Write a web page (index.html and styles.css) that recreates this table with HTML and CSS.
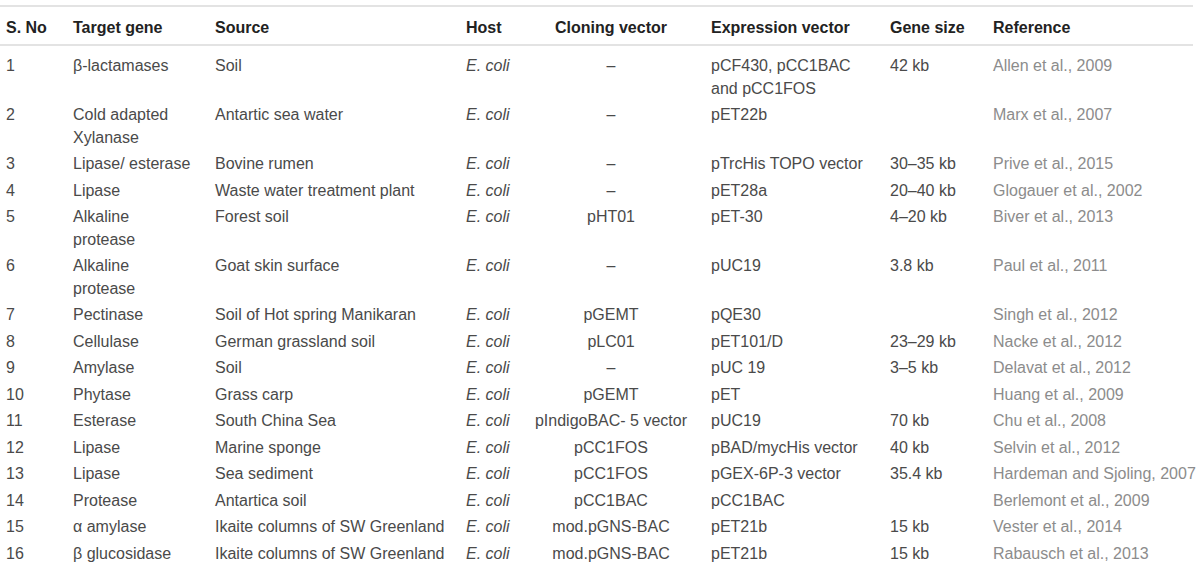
FILE: index.html
```html
<!DOCTYPE html>
<html lang="en">
<head>
<meta charset="utf-8">
<title>Metagenomic enzymes</title>
<link rel="stylesheet" href="styles.css">
</head>
<body>
<table class="data">
  <colgroup>
    <col class="w-no"><col class="w-gene"><col class="w-src"><col class="w-host">
    <col class="w-clone"><col class="w-expr"><col class="w-size"><col class="w-ref">
  </colgroup>
  <thead>
    <tr>
      <th>S. No</th><th>Target gene</th><th>Source</th><th>Host</th>
      <th class="center">Cloning vector</th><th class="expr">Expression vector</th><th>Gene size</th><th>Reference</th>
    </tr>
  </thead>
  <tbody>
    <tr><td>1</td><td>β-lactamases</td><td>Soil</td><td class="host">E. coli</td><td class="center">–</td><td class="expr">pCF430, pCC1BAC<br>and pCC1FOS</td><td>42 kb</td><td class="ref">Allen et al., 2009</td></tr>
    <tr><td>2</td><td>Cold adapted<br>Xylanase</td><td>Antartic sea water</td><td class="host">E. coli</td><td class="center">–</td><td class="expr">pET22b</td><td></td><td class="ref">Marx et al., 2007</td></tr>
    <tr><td>3</td><td>Lipase/ esterase</td><td>Bovine rumen</td><td class="host">E. coli</td><td class="center">–</td><td class="expr">pTrcHis TOPO vector</td><td>30–35 kb</td><td class="ref">Prive et al., 2015</td></tr>
    <tr><td>4</td><td>Lipase</td><td>Waste water treatment plant</td><td class="host">E. coli</td><td class="center">–</td><td class="expr">pET28a</td><td>20–40 kb</td><td class="ref">Glogauer et al., 2002</td></tr>
    <tr><td>5</td><td>Alkaline<br>protease</td><td>Forest soil</td><td class="host">E. coli</td><td class="center">pHT01</td><td class="expr">pET-30</td><td>4–20 kb</td><td class="ref">Biver et al., 2013</td></tr>
    <tr><td>6</td><td>Alkaline<br>protease</td><td>Goat skin surface</td><td class="host">E. coli</td><td class="center">–</td><td class="expr">pUC19</td><td>3.8 kb</td><td class="ref">Paul et al., 2011</td></tr>
    <tr><td>7</td><td>Pectinase</td><td>Soil of Hot spring Manikaran</td><td class="host">E. coli</td><td class="center">pGEMT</td><td class="expr">pQE30</td><td></td><td class="ref">Singh et al., 2012</td></tr>
    <tr><td>8</td><td>Cellulase</td><td>German grassland soil</td><td class="host">E. coli</td><td class="center">pLC01</td><td class="expr">pET101/D</td><td>23–29 kb</td><td class="ref">Nacke et al., 2012</td></tr>
    <tr><td>9</td><td>Amylase</td><td>Soil</td><td class="host">E. coli</td><td class="center">–</td><td class="expr">pUC 19</td><td>3–5 kb</td><td class="ref">Delavat et al., 2012</td></tr>
    <tr><td>10</td><td>Phytase</td><td>Grass carp</td><td class="host">E. coli</td><td class="center">pGEMT</td><td class="expr">pET</td><td></td><td class="ref">Huang et al., 2009</td></tr>
    <tr><td>11</td><td>Esterase</td><td>South China Sea</td><td class="host">E. coli</td><td class="center">pIndigoBAC- 5 vector</td><td class="expr">pUC19</td><td>70 kb</td><td class="ref">Chu et al., 2008</td></tr>
    <tr><td>12</td><td>Lipase</td><td>Marine sponge</td><td class="host">E. coli</td><td class="center">pCC1FOS</td><td class="expr">pBAD/mycHis vector</td><td>40 kb</td><td class="ref">Selvin et al., 2012</td></tr>
    <tr><td>13</td><td>Lipase</td><td>Sea sediment</td><td class="host">E. coli</td><td class="center">pCC1FOS</td><td class="expr">pGEX-6P-3 vector</td><td>35.4 kb</td><td class="ref">Hardeman and Sjoling, 2007</td></tr>
    <tr><td>14</td><td>Protease</td><td>Antartica soil</td><td class="host">E. coli</td><td class="center">pCC1BAC</td><td class="expr">pCC1BAC</td><td></td><td class="ref">Berlemont et al., 2009</td></tr>
    <tr><td>15</td><td>α amylase</td><td>Ikaite columns of SW Greenland</td><td class="host">E. coli</td><td class="center">mod.pGNS-BAC</td><td class="expr">pET21b</td><td>15 kb</td><td class="ref">Vester et al., 2014</td></tr>
    <tr><td>16</td><td>β glucosidase</td><td>Ikaite columns of SW Greenland</td><td class="host">E. coli</td><td class="center">mod.pGNS-BAC</td><td class="expr">pET21b</td><td>15 kb</td><td class="ref">Rabausch et al., 2013</td></tr>
  </tbody>
</table>
</body>
</html>
```
FILE: styles.css
```css
html, body {
  margin: 0;
  padding: 0;
  background: #ffffff;
}

body {
  font-family: "Liberation Sans", Arial, Helvetica, sans-serif;
  font-size: 16px;
  line-height: 22.5px;
  color: #4a4a4a;
}

.data {
  margin: 5px 7px 0 0;
  width: 1193px;
  table-layout: fixed;
  border-collapse: collapse;
  border-top: 2px solid #e3e3e3;
}

.w-no { width: 67px; }
.w-gene { width: 142px; }
.w-src { width: 251px; }
.w-host { width: 67px; }
.w-clone { width: 168px; }
.w-expr { width: 189px; }
.w-size { width: 103px; }
.w-ref { width: 206px; }

.data th {
  text-align: left;
  font-weight: bold;
  line-height: 21px;
  color: #222222;
  padding: 10px 6px 6px 6px;
  border-bottom: 2px solid #e3e3e3;
  white-space: nowrap;
}

.data td {
  padding: 2px 6px 2px 6px;
  vertical-align: top;
  white-space: nowrap;
}

.data tbody tr:first-child td {
  padding-top: 9px;
}

.data .center {
  text-align: center;
}

.data .expr {
  padding-left: 16px;
}

.data .host {
  font-style: italic;
}

.data .ref {
  color: #8c8c8c;
}
```
